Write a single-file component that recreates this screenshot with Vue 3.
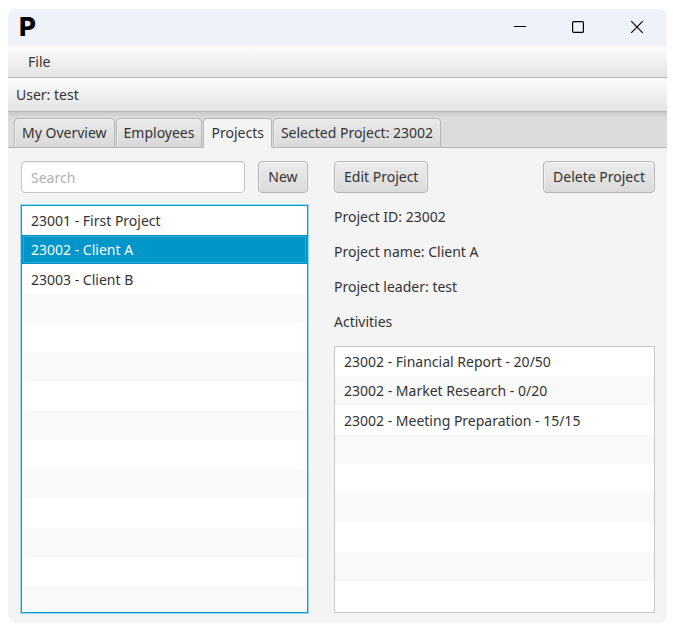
<script setup>
import { computed, ref } from 'vue'

const tabs = ['My Overview', 'Employees', 'Projects', 'Selected Project: 23002']
const activeTab = ref('Projects')

const search = ref('')
const projects = [
  { id: '23001', name: 'First Project' },
  { id: '23002', name: 'Client A' },
  { id: '23003', name: 'Client B' },
]
const selectedId = ref('23002')
const selected = computed(() => projects.find((p) => p.id === selectedId.value))

const activities = [
  '23002 - Financial Report - 20/50',
  '23002 - Market Research - 0/20',
  '23002 - Meeting Preparation - 15/15',
]
</script>

<template>
  <div class="screen">
    <div class="window">
      <header class="titlebar">
        <span class="logo">P</span>
        <div class="window-controls">
          <button type="button" aria-label="Minimize">
            <svg width="14" height="14" viewBox="0 0 14 14"><path d="M1 6.5H13" /></svg>
          </button>
          <button type="button" aria-label="Maximize">
            <svg width="14" height="14" viewBox="0 0 14 14">
              <rect x="1.6" y="1.6" width="10.8" height="10.8" rx="1" />
            </svg>
          </button>
          <button type="button" aria-label="Close">
            <svg width="14" height="14" viewBox="0 0 14 14">
              <path d="M1.2 1.2L12.8 12.8M12.8 1.2L1.2 12.8" />
            </svg>
          </button>
        </div>
      </header>

      <nav class="menubar"><button type="button">File</button></nav>
      <div class="userbar">User: test</div>

      <div class="tabs" role="tablist">
        <button
          v-for="tab in tabs"
          :key="tab"
          type="button"
          role="tab"
          class="tab"
          :class="{ active: tab === activeTab }"
          :aria-selected="tab === activeTab"
          @click="activeTab = tab"
        >{{ tab }}</button>
      </div>

      <main class="content">
        <section class="column">
          <div class="row">
            <input v-model="search" class="search" type="text" placeholder="Search" aria-label="Search" />
            <button type="button" class="btn">New</button>
          </div>
          <ul class="list focused">
            <li v-for="p in projects" :key="p.id" :class="{ selected: p.id === selectedId }">
              <button type="button" @click="selectedId = p.id">{{ p.id }} - {{ p.name }}</button>
            </li>
            <li v-for="n in 11" :key="'empty' + n"></li>
          </ul>
        </section>

        <section class="column details">
          <div class="row spread">
            <button type="button" class="btn">Edit Project</button>
            <button type="button" class="btn">Delete Project</button>
          </div>
          <div class="facts">
            <p>Project ID: {{ selected.id }}</p>
            <p>Project name: {{ selected.name }}</p>
            <p>Project leader: test</p>
            <p>Activities</p>
          </div>
          <ul class="list">
            <li v-for="a in activities" :key="a"><button type="button">{{ a }}</button></li>
            <li v-for="n in 6" :key="'empty' + n"></li>
          </ul>
        </section>
      </main>
    </div>
  </div>
</template>

<style>
body {
  background: #fff;
}
</style>

<style scoped>
.screen {
  box-sizing: border-box;
  height: 100vh;
  padding: 9px 6px 9px 8px;
  font: 14px/20px "Noto Sans", "Open Sans", sans-serif;
  color: #333;
}
.window {
  display: flex;
  flex-direction: column;
  height: 100%;
  overflow: hidden;
  border-radius: 8px;
  background: #f4f4f4;
}
button,
input {
  box-sizing: border-box;
  margin: 0;
  padding: 0;
  border: 0;
  font: inherit;
  color: inherit;
  background: none;
  outline: none;
}
.titlebar {
  display: flex;
  flex: none;
  justify-content: space-between;
  height: 37px;
  padding-left: 11px;
  background: #f0f2f9;
}
.logo {
  font: 800 26px/36px Inter, "Open Sans", sans-serif;
  color: #000;
}
.window-controls {
  display: flex;
}
.window-controls button {
  display: flex;
  align-items: center;
  justify-content: center;
  width: 58px;
  height: 36px;
}
.window-controls button:last-child {
  width: 60px;
}
.window-controls svg {
  fill: none;
  stroke: #000;
  stroke-width: 1.2;
}
.menubar,
.userbar {
  box-sizing: border-box;
  flex: none;
  border-bottom: 1px solid #b5b5b5;
  background: linear-gradient(#fcfcfc, #e4e4e4);
}
.menubar {
  height: 32px;
  padding: 6px 20px;
}
.menubar button {
  display: block;
}
.userbar {
  height: 34px;
  padding: 7px 8px;
}
.tabs {
  box-sizing: border-box;
  display: flex;
  flex: none;
  gap: 1px;
  height: 36px;
  padding: 6px 6px 0;
  background: linear-gradient(#cacaca, #dcdcdc 6px);
  box-shadow: inset 0 -1px #b5b5b5;
}
.tab {
  height: 30px;
  padding: 0 7px;
  border: 1px solid #b5b5b5;
  border-radius: 4px 4px 0 0;
  background: linear-gradient(#eaeaea, #d9d9d9);
  box-shadow: inset 1px 1px #f0f0f0;
  white-space: nowrap;
}
.tab.active {
  border-bottom-color: #f4f4f4;
  background: #f4f4f4;
  box-shadow: none;
}
.content {
  display: grid;
  flex: 1;
  grid-template-columns: 287px minmax(0, 1fr);
  grid-template-rows: minmax(0, 1fr);
  gap: 26px;
  min-height: 0;
  padding: 13px 12px 10px 13px;
}
.column {
  display: flex;
  flex-direction: column;
  gap: 12px;
  min-height: 0;
}
.details {
  gap: 6px;
}
.row {
  display: flex;
  flex: none;
  gap: 13px;
}
.spread {
  justify-content: space-between;
}
.search {
  flex: 1;
  min-width: 0;
  height: 32px;
  padding: 0 9px;
  border: 1px solid #c4c4c4;
  border-radius: 4px;
  background: #fff;
  box-shadow: inset 0 1px 1px #ececec;
}
.search::placeholder {
  color: #b2b2b2;
  opacity: 1;
}
.btn {
  min-width: 50px;
  height: 32px;
  padding: 0 9px;
  border: 1px solid #b5b5b5;
  border-radius: 4px;
  background: linear-gradient(#ececec, #dadada);
  box-shadow: inset 0 1px #f8f8f8, inset 1px 0 #eee, inset -1px 0 #eee;
  white-space: nowrap;
}
.facts {
  padding-bottom: 1px;
}
.facts p {
  margin: 0;
  line-height: 35px;
}
.list {
  display: grid;
  flex: 1 1 0;
  grid-auto-rows: 29px 29px 30px 29px;
  align-content: start;
  min-height: 0;
  margin: 0;
  padding: 0;
  overflow: hidden;
  border: 1px solid #c8c8c8;
  background: #fff;
  list-style: none;
}
.list.focused {
  border-color: #039ed3;
  box-shadow: 0 0 0 1px #9fd6ea;
}
.list li {
  display: flex;
  align-items: flex-end;
}
.list li:nth-child(even) {
  background: #f9f9f9;
}
.list li.selected {
  background: #0096c9;
  box-shadow: inset 0 0 0 1px #0096c9, inset 0 0 0 2px #2ba7d2;
  color: #fff;
}
.list button {
  width: 100%;
  height: 29px;
  padding: 0 9px;
  text-align: left;
  white-space: nowrap;
}
</style>
